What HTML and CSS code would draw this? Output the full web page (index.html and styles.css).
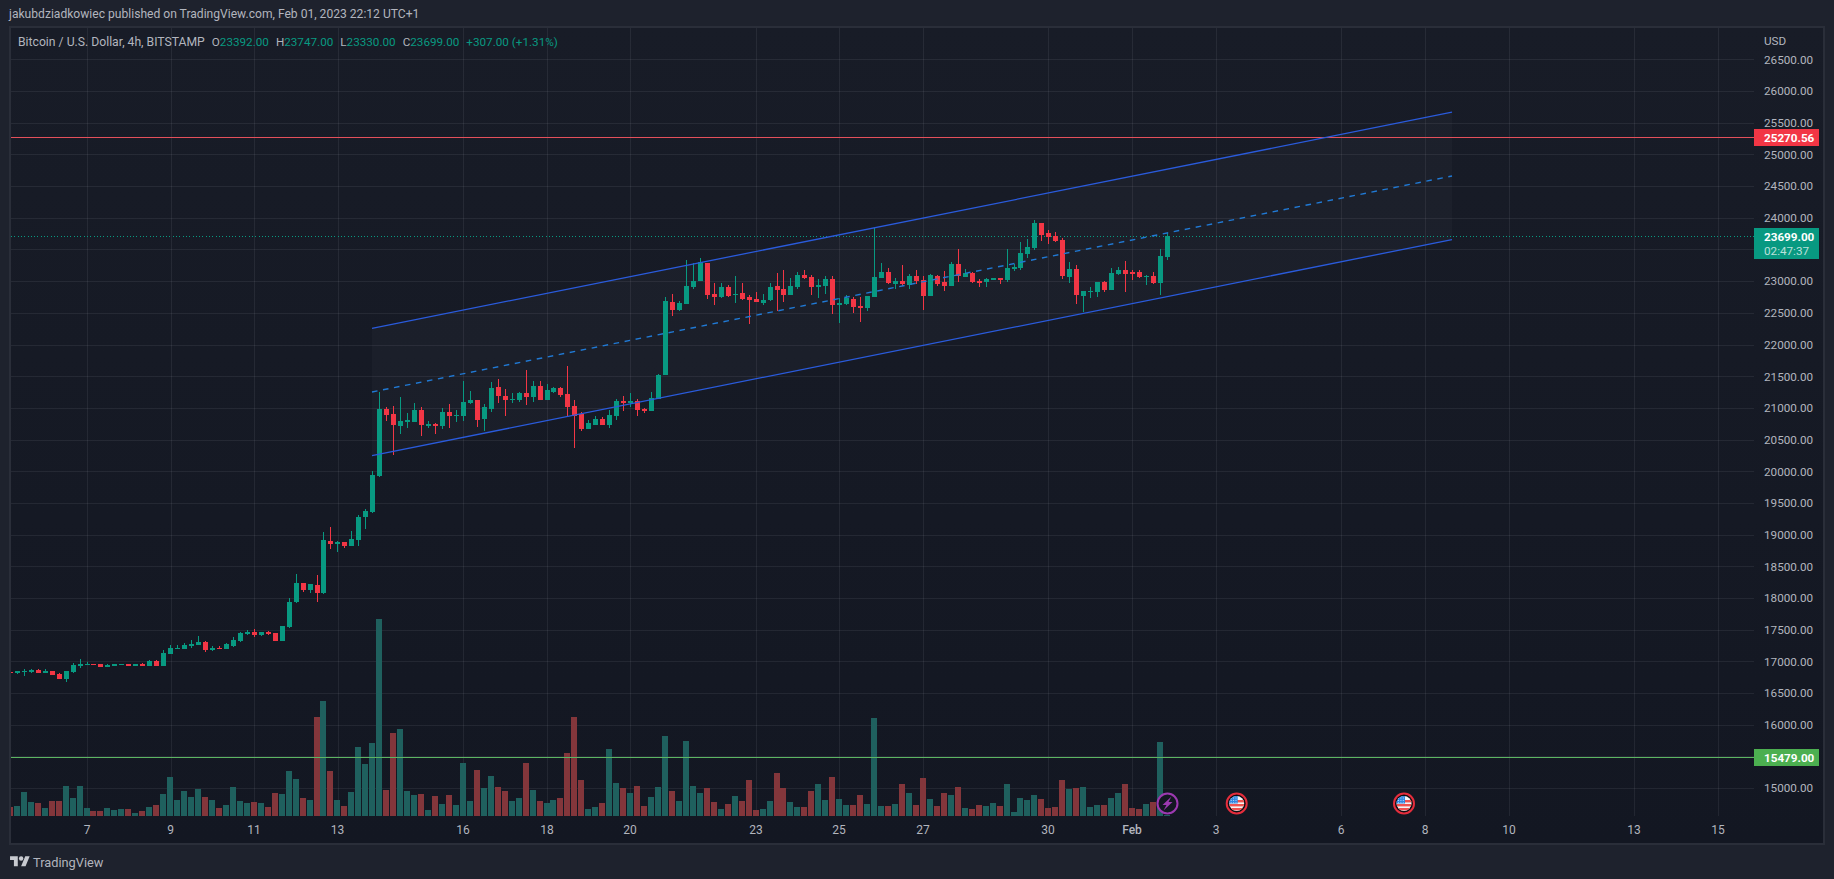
FILE: index.html
```html
<!DOCTYPE html>
<html lang="en">
<head>
<meta charset="utf-8">
<title>Bitcoin / U.S. Dollar, 4h, BITSTAMP</title>
<link rel="stylesheet" href="styles.css">
</head>
<body>
<header class="pubbar">jakubdziadkowiec published on TradingView.com, Feb 01, 2023 22:12 UTC+1</header>
<main class="frame">
  <svg id="chart" class="chart" viewBox="11 28 1812 815" width="1812" height="815" xmlns="http://www.w3.org/2000/svg"></svg>
  <div class="legend">
    <span class="symbol">Bitcoin / U.S. Dollar, 4h, BITSTAMP</span>
    <span class="ohlc">O<b>23392.00</b></span>
    <span class="ohlc">H<b>23747.00</b></span>
    <span class="ohlc">L<b>23330.00</b></span>
    <span class="ohlc">C<b>23699.00</b></span>
    <span class="ohlc"><b>+307.00 (+1.31%)</b></span>
  </div>
</main>
<footer class="brand">
  <svg class="logo" viewBox="0 0 36 28" width="20" height="15.5" xmlns="http://www.w3.org/2000/svg"><path d="M14 22H7V11H0V4h14v18zM28 22h-8l7.5-18h8L28 22z"/><circle cx="20" cy="8" r="4"/></svg>
  <span>TradingView</span>
</footer>
<script src="chart.js"></script>
</body>
</html>
```
FILE: styles.css
```css
* { box-sizing: border-box; }
html, body { margin: 0; height: 100%; }
body {
  width: 1834px;
  height: 879px;
  overflow: hidden;
  display: flex;
  flex-direction: column;
  padding: 0 9px;
  background: #1e222d;
  color: #b2b5be;
  font-family: Roboto, "Liberation Sans", sans-serif;
}
.pubbar {
  height: 26px;
  line-height: 28px;
  font-size: 12.1px;
  white-space: nowrap;
}
.frame {
  position: relative;
  width: 1816px;
  height: 819px;
  border: 2px solid #2a2e39;
  background: linear-gradient(#181c27, #131722);
}
.chart { display: block; }
.legend {
  position: absolute;
  left: 7px;
  top: 6px;
  display: flex;
  gap: 7px;
  font-size: 11.7px;
  line-height: 16px;
  white-space: nowrap;
}
.symbol { font-size: 12.2px; }
.ohlc b { font-weight: 400; color: #089981; }
.brand {
  flex: 1;
  display: flex;
  align-items: center;
  gap: 3px;
  padding-left: 1px;
  font-size: 12.8px;
  color: #b2b5be;
}
.logo { fill: #c8cad0; }

.channel-fill { fill: rgba(255,255,255,.022); }
.grid { stroke: rgba(240,243,250,.07); stroke-width: 1; shape-rendering: crispEdges; }
.up { fill: #089981; }
.down { fill: #f23645; }
.vol-up { fill: #1f605e; }
.vol-down { fill: #83363b; }
.hline { stroke-width: 1; shape-rendering: crispEdges; }
.hline-red { stroke: #e4505b; }
.hline-green { stroke: #5cb562; }
.hline-dot { stroke: #089981; stroke-dasharray: 1 2.3; }
.ch-solid { stroke: #2a5bdc; stroke-width: 1.3; fill: none; }
.ch-dash { stroke: #2079d4; stroke-width: 1.4; stroke-dasharray: 5.6 5.6; fill: none; }
.axis-text { fill: #b2b5be; font-size: 11.7px; font-family: Roboto, "Liberation Sans", sans-serif; }
.axis-time { text-anchor: middle; font-size: 12px; }
.axis-month { font-weight: 500; }
.tag-red { fill: #f23645; }
.tag-teal { fill: #089981; }
.tag-green { fill: #4caf50; }
.tag-text { fill: #fff; font-size: 11.7px; font-weight: 700; font-family: Roboto, "Liberation Sans", sans-serif; }
.tag-sub { fill: rgba(255,255,255,.72); font-size: 11.7px; font-family: Roboto, "Liberation Sans", sans-serif; }
.ev-ring-purple { fill: #131722; stroke: #9c39b0; stroke-width: 2; }
.ev-bolt { fill: #9c39b0; }
.ev-ring-red { fill: #0c0e14; stroke: #e52d3c; stroke-width: 2; }
.flag-white { fill: #f4f4f4; }
.flag-red { fill: #ef5350; }
.flag-blue { fill: #2f86e0; }
.flag-star { fill: #bcdcff; }
```
FILE: chart.js
```js
const NS = 'http://www.w3.org/2000/svg';
const svg = document.getElementById('chart');

function el(name, attrs, parent, text) {
  const node = document.createElementNS(NS, name);
  for (const key in attrs) node.setAttribute(key, attrs[key]);
  if (text !== undefined) node.textContent = text;
  (parent || svg).appendChild(node);
  return node;
}

/* candle tuples: up?, wick top, body top, body bottom, wick bottom, on a 3x ruler from a base y */
const candleSegments = [
  [460, [
    [0,630,636,639,640],[1,633,633,639,641],[1,627,632,635,648],[1,627,630,636,639],[0,627,630,639,639],[1,627,633,639,639],
    [0,633,633,645,645],[0,639,642,657,657],[1,633,633,657,666],[1,609,615,636,639],[1,597,612,618,624],[1,606,612,615,615],
    [0,612,612,615,615],[0,612,612,621,621],[1,612,615,621,621],[1,612,612,618,618],[1,612,612,615,615],[0,612,612,618,618],
    [1,612,612,618,618],[0,609,612,618,618],[1,600,603,618,618],[0,600,603,618,618],[1,570,579,618,618],[1,555,564,582,582],
    [1,555,564,567,567],[1,549,555,567,567],[1,540,552,558,564],[1,528,546,555,555],[0,543,546,570,576],[1,558,564,570,573],
    [0,558,564,567,567],[1,549,552,567,567],[1,531,540,558,561],[1,516,519,543,546],[1,510,516,522,525],[0,507,516,525,531],
    [1,516,516,525,528],[0,513,516,522,525],[0,519,519,543,543],[1,498,498,543,543],[1,414,426,501,504],[1,342,369,426,429],
    [0,369,369,390,396],[1,372,372,390,399],[0,345,375,399,426],[1,216,240,399,402],[0,201,243,252,267],[1,243,246,252,276],
    [0,246,246,258,264],[1,213,237,258,258],[1,165,171,240,258],[1,147,153,171,207],[1,33,45,156,159]
  ]],
  [320, [
    [1,216,267,468,471],[0,261,267,285,303],[0,258,282,315,405],[1,231,303,318,342],[1,279,300,306,324],[1,249,270,306,306],
    [0,261,270,315,348],[1,303,312,318,324],[0,309,312,318,342],[1,264,276,318,327],[0,252,276,288,324],[1,270,285,288,306],
    [1,183,246,288,303],[1,213,240,249,252],[0,240,240,300,321],[1,252,261,297,333],[1,186,204,267,276],[0,177,201,228,249],
    [0,207,228,240,288],[1,219,237,240,249],[1,216,219,240,246],[0,150,219,231,255],[1,183,198,231,246],[0,183,198,240,240],
    [1,192,210,240,240],[1,201,204,216,219],[0,201,204,225,231],[0,138,222,261,291],[0,240,258,288,384],[0,276,282,327,333],
    [1,300,309,327,327],[1,288,297,315,315],[0,291,297,315,315],[1,270,285,315,324],[1,237,243,288,300],[0,228,243,249,273],
    [1,219,243,249,261],[0,237,243,270,288],[0,264,267,273,279],[1,216,234,273,273],[1,162,165,237,237]
  ]],
  [230, [
    [1,201,213,435,435],[0,192,216,240,258],[1,213,219,240,243],[1,90,168,222,222],[1,99,153,171,177],[1,84,96,153,153],
    [0,99,99,195,207],[0,159,192,201,225],[1,159,171,201,204],[0,165,171,198,201],[1,138,192,195,219],[0,159,189,207,210],
    [0,195,201,210,282],[0,186,207,216,216],[1,192,210,219,225],[1,159,171,210,213],[0,129,168,180,243],[0,120,177,195,216],
    [1,144,168,195,195],[1,126,135,171,177],[0,120,135,144,147],[0,135,141,171,195],[1,147,165,171,204],[1,138,147,168,192],
    [0,138,147,225,252],[1,204,219,225,279],[1,195,204,222,225],[0,201,207,231,249],[0,201,228,234,276],[1,198,198,234,243],
    [1,-6,141,201,201],[1,99,126,144,144],[0,114,126,159,162],[1,144,153,162,177],[0,105,153,162,168],[1,132,138,165,177],
    [0,120,138,153,162],[0,138,150,198,240],[1,132,135,198,198],[0,135,138,162,168],[0,123,156,168,183],[1,96,102,168,168],
    [0,57,102,138,156],[1,117,129,141,141],[0,126,129,156,159],[0,147,153,159,171]
  ]],
  [200, [
    [1,234,237,246,261],[1,234,234,240,240],[0,234,234,240,252],[1,147,204,240,246],[1,192,201,207,213],[1,126,159,204,210],
    [1,117,141,162,174],[1,60,69,144,150],[0,69,69,105,123],[0,90,99,111,132],[0,96,108,123,126],[0,114,120,228,237],
    [1,186,207,231,249],[0,195,207,285,312],[1,273,273,288,336],[1,261,273,276,294],[1,246,246,276,291],[0,243,246,270,276],
    [1,204,219,270,270],[1,201,210,222,225],[0,183,210,222,276],[0,210,216,222,240],[0,210,216,231,234],[1,225,228,231,255],
    [0,216,228,249,252],[1,147,168,249,285],[1,99,108,171,180]
  ]]
];

/* volume bar tops on the same 3x ruler, relative to a base */
const volumeSegments = [
  [528, [501,498,456,486,489,504,483,483,438,474,438,504,513,513,504,510,507,507,519,513,501,495,462,411,480,453,471,447,471,480,504,495,441,483,489,486,489,501,459,462,393,417,474,480,231,183,393,480,498,456,321,372,309,-63,450,279,267,453,465,462,510,468]],
  [348, [312,285,315,189,303,210,264,228,261,273,303,294,189,270,303,309,300,294,159,51,240,327,321,309,147,249,264,279,258,318,291,261,108,273,303,123,258,279,264,306,327,312,288,303,240,330,327,303,219,264,306,321,
         321,273,252,300,231,297,315,315,285,312,54,318,318,312,252,279,315,234,297,318,279,285,261,324,327,315,318,309,318,252,336,294,300,285,297,324,321,240,267,264,261,321,315,315,294,279,252,324,327,312,306,126,345]]
];

const X0 = 17.3, STEP = 6.97;
const PLOT = { left: 11, right: 1754, top: 28, bottom: 816 };
const priceY = p => 59.4 + (26500 - p) * 0.06336;

const candles = [];
candleSegments.forEach(([base, list]) => list.forEach(c => {
  candles.push({ up: c[0], wt: base + c[1] / 3, bt: base + c[2] / 3, bb: base + c[3] / 3, wb: base + c[4] / 3 });
}));
const volumes = [];
volumeSegments.forEach(([base, list]) => list.forEach(t => volumes.push((base - t) / 3)));

const defs = el('defs', {});
const clip = el('clipPath', { id: 'plot' }, defs);
el('rect', { x: PLOT.left, y: PLOT.top, width: PLOT.right - PLOT.left, height: PLOT.bottom - PLOT.top }, clip);
const flagClipA = el('clipPath', { id: 'flagclip' }, defs);
el('circle', { cx: 0, cy: 0, r: 7.5 }, flagClipA);

const plot = el('g', { 'clip-path': 'url(#plot)' });

/* channel fill */
el('polygon', { class: 'channel-fill', points: '372,328.3 1452,112.2 1452,239.6 372,455.6' }, plot);

/* grid */
for (let p = 15000; p <= 26500; p += 500) {
  const y = Math.round(priceY(p)) + 0.5;
  el('line', { class: 'grid', x1: PLOT.left, x2: PLOT.right, y1: y, y2: y }, plot);
}
const times = [
  ['7', 87], ['9', 170.5], ['11', 254], ['13', 337.5], ['16', 463], ['18', 547], ['20', 630], ['23', 756], ['25', 839],
  ['27', 923], ['30', 1048], ['Feb', 1132], ['3', 1216], ['6', 1341], ['8', 1425], ['10', 1509], ['13', 1634], ['15', 1718]
];
times.forEach(([, x]) => {
  const px = Math.round(x) + 0.5;
  el('line', { class: 'grid', x1: px, x2: px, y1: PLOT.top, y2: PLOT.bottom }, plot);
});

const body = (cls, x, y, w, h) => el('rect', { class: cls, x, y, width: w, height: Math.max(h, 1), 'shape-rendering': 'crispEdges' }, plot);

/* volume */
candles.forEach((c, i) => {
  const left = Math.round(X0 + (i - 1) * STEP - 2.5) - 1;
  body(c.up ? 'vol-up' : 'vol-down', left, PLOT.bottom - volumes[i], 6, volumes[i]);
});

/* horizontal levels */
const hline = (cls, y) => el('line', { class: 'hline ' + cls, x1: PLOT.left, x2: PLOT.right, y1: y, y2: y }, plot);
hline('hline-green', 757.5);
hline('hline-red', 137.5);
hline('hline-dot', 236.5);

/* candles */
candles.forEach((c, i) => {
  const cls = c.up ? 'up' : 'down';
  const left = Math.round(X0 + (i - 1) * STEP - 2.5);
  body(cls, left + 2, c.wt, 1, c.wb - c.wt);
  body(cls, left, c.bt, 5, c.bb - c.bt);
});

/* channel */
const chan = (cls, y1, y2) => el('line', { class: cls, x1: 372, y1, x2: 1452, y2 }, plot);
chan('ch-solid', 328.3, 112.2);
chan('ch-dash', 392, 176);
chan('ch-solid', 455.6, 239.6);

/* events */
const bolt = el('g', { transform: 'translate(1167.5 803.5)' });
el('circle', { class: 'ev-ring-purple', r: 10 }, bolt);
el('polygon', { class: 'ev-bolt', points: '4,-7 -5,1.5 -1,1.5 -4,7 5,-1.5 1,-1.5' }, bolt);
[1236.7, 1404].forEach(x => {
  const g = el('g', { transform: `translate(${x} 803.5)` });
  el('circle', { class: 'ev-ring-red', r: 10 }, g);
  const f = el('g', { 'clip-path': 'url(#flagclip)' }, g);
  el('rect', { class: 'flag-white', x: -8, y: -8, width: 16, height: 16 }, f);
  [-3.5, 0.5, 4.5].forEach(y => el('rect', { class: 'flag-red', x: y < 0 ? 0 : -8, y, width: 16, height: 2.4 }, f));
  el('rect', { class: 'flag-blue', x: -8, y: -8, width: 9, height: 8 }, f);
  for (let a = -6; a < 0; a += 2.4) for (let b = -6; b < 0; b += 2.4) {
    el('rect', { class: 'flag-star', x: a, y: b, width: 1, height: 1 }, f);
  }
});

/* price axis: the levels hidden behind the value tags get no label */
const axisX = 1764;
el('text', { class: 'axis-text', x: axisX, y: 45 }, svg, 'USD');
for (let p = 15000; p <= 26500; p += 500) {
  if (p === 23500 || p === 15500) continue;
  el('text', { class: 'axis-text', x: axisX, y: priceY(p) + 4.3 }, svg, p.toFixed(2));
}
const tag = (cls, y, h) => el('rect', { class: cls, x: 1754, y, width: 65, height: h, 'shape-rendering': 'crispEdges' });
tag('tag-red', 129, 17);
el('text', { class: 'tag-text', x: axisX, y: 142 }, svg, '25270.56');
tag('tag-teal', 228, 31);
el('text', { class: 'tag-text', x: axisX, y: 241 }, svg, '23699.00');
el('text', { class: 'tag-sub', x: axisX, y: 255 }, svg, '02:47:37');
tag('tag-green', 749, 17);
el('text', { class: 'tag-text', x: axisX, y: 762 }, svg, '15479.00');

/* time axis */
times.forEach(([label, x]) => {
  el('text', { class: 'axis-text axis-time' + (label === 'Feb' ? ' axis-month' : ''), x, y: 833.5 }, svg, label);
});
```
